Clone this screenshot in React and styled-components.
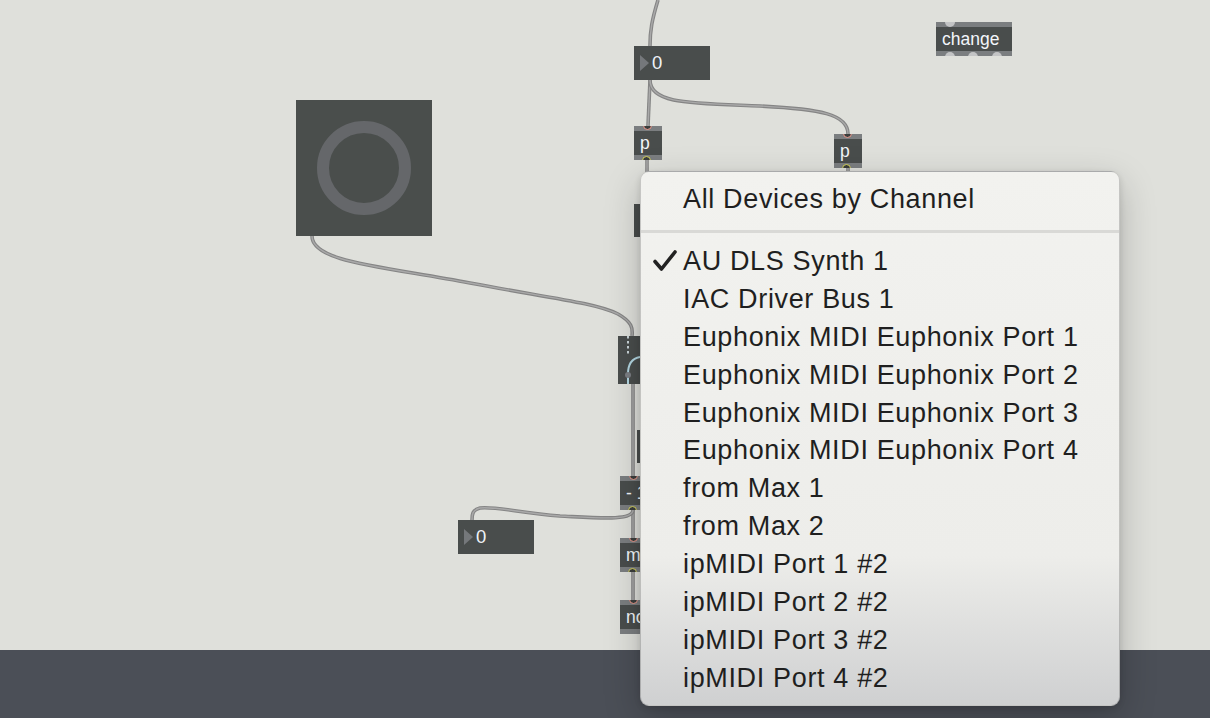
import React from 'react';
import styled, { createGlobalStyle } from 'styled-components';

const GlobalStyle = createGlobalStyle`
  html, body {
    margin: 0;
    padding: 0;
    overflow: hidden;
    background: #dfe0db;
  }
`;

const devices = [
  { name: 'AU DLS Synth 1', checked: true },
  { name: 'IAC Driver Bus 1' },
  { name: 'Euphonix MIDI Euphonix Port 1' },
  { name: 'Euphonix MIDI Euphonix Port 2' },
  { name: 'Euphonix MIDI Euphonix Port 3' },
  { name: 'Euphonix MIDI Euphonix Port 4' },
  { name: 'from Max 1' },
  { name: 'from Max 2' },
  { name: 'ipMIDI Port 1 #2' },
  { name: 'ipMIDI Port 2 #2' },
  { name: 'ipMIDI Port 3 #2' },
  { name: 'ipMIDI Port 4 #2' },
];

// patch cords, drawn in canvas coordinates
const cords = [
  'M658 0 C652 20, 650 30, 650 46',
  'M650 80 L648 126',
  'M650 80 C650 104, 690 103, 760 106 C820 109, 848 114, 848 134',
  'M647 160 L647 175',
  'M848 168 L848 175',
  'M312 236 C312 262, 380 266, 470 283 C550 298, 596 303, 618 314 C632 322, 633 328, 632 336',
  'M633 384 L633 476',
  'M633 510 L633 538',
  'M633 510 C633 521, 600 518, 560 516 C520 513, 495 506, 480 508 C472 510, 472 515, 472 520',
  'M633 572 L633 600',
];

const App = () => {
  return (
    <Page>
      <GlobalStyle />
      <Canvas>
        <Cords width="1210" height="650">
          {cords.map((d, i) => (
            <g key={i}>
              <path d={d} stroke="#858585" strokeWidth="3.6" fill="none" />
              <path d={d} stroke="#a9a9a9" strokeWidth="1.4" fill="none" />
            </g>
          ))}
        </Cords>

        <NumberBox $x={634} $y={46}>
          <Arrow />
          <NumValue>0</NumValue>
        </NumberBox>
        <NumberBox $x={458} $y={520}>
          <Arrow />
          <NumValue>0</NumValue>
        </NumberBox>

        <MaxObject $x={634} $y={126} $w={28}>
          <Band><Inlet $left={9} $color="#ef9c8f" /></Band>
          <ObjLabel>p</ObjLabel>
          <Band><Outlet $left={8} $color="#d9d75e" /></Band>
        </MaxObject>

        <MaxObject $x={834} $y={134} $w={28}>
          <Band><Inlet $left={9} $color="#ef9c8f" /></Band>
          <ObjLabel>p</ObjLabel>
          <Band><Outlet $left={8} $color="#d9d75e" /></Band>
        </MaxObject>

        <MaxObject $x={936} $y={22} $w={76}>
          <Band><Inlet $left={9} $fill /></Band>
          <ObjLabel $pad={6}>change</ObjLabel>
          <Band>
            <Outlet $left={9} $fill />
            <Outlet $left={32} $fill />
            <Outlet $left={56} $fill />
          </Band>
        </MaxObject>

        <Dial>
          <Ring />
        </Dial>

        <DarkBlock $x={634} $y={204} $w={30} $h={33} />
        <DarkBlock $x={637} $y={430} $w={30} $h={33} />

        <GainBox>
          <svg width="22" height="48" viewBox="0 0 22 48">
            <path d="M10 0 L10 18" stroke="#c9d4d8" strokeWidth="2" strokeDasharray="2.5 2.5" />
            <path d="M10 48 L10 38 Q10 23 22 21" stroke="#b3d7e3" strokeWidth="2" fill="none" />
            <circle cx="10" cy="39" r="3" fill="#7c7f84" />
          </svg>
        </GainBox>

        <MaxObject $x={620} $y={476} $w={60}>
          <Band><Inlet $left={9} $color="#ef9c8f" /></Band>
          <ObjLabel>- 1</ObjLabel>
          <Band><Outlet $left={8} $color="#d9d75e" /></Band>
        </MaxObject>

        <MaxObject $x={620} $y={538} $w={60}>
          <Band><Inlet $left={9} $color="#ef9c8f" /></Band>
          <ObjLabel>mtof</ObjLabel>
          <Band><Outlet $left={8} $color="#d9d75e" /></Band>
        </MaxObject>

        <MaxObject $x={620} $y={600} $w={80}>
          <Band><Inlet $left={9} $color="#ef9c8f" /></Band>
          <ObjLabel>noteout</ObjLabel>
          <Band />
        </MaxObject>
      </Canvas>

      <BottomBar />

      <Menu>
        <MenuItem>
          <CheckSlot />
          <ItemText>All Devices by Channel</ItemText>
        </MenuItem>
        <Separator />
        {devices.map((d) => (
          <MenuItem key={d.name}>
            <CheckSlot>
              {d.checked && (
                <svg width="24" height="22" viewBox="0 0 24 22">
                  <path d="M2 11.5 L8.5 19 L22 2" stroke="#222" strokeWidth="3.6" fill="none" strokeLinecap="round" strokeLinejoin="round" />
                </svg>
              )}
            </CheckSlot>
            <ItemText>{d.name}</ItemText>
          </MenuItem>
        ))}
      </Menu>
    </Page>
  );
};

// Styled components
const Page = styled.div`
  position: relative;
  width: 1210px;
  height: 718px;
  display: flex;
  flex-direction: column;
  overflow: hidden;
  font-family: "Liberation Sans", Arial, sans-serif;
`;

const Canvas = styled.div`
  position: relative;
  flex: 1;
  background: #dfe0db;
  overflow: hidden;
`;

const Cords = styled.svg`
  position: absolute;
  left: 0;
  top: 0;
  z-index: 0;
`;

const BottomBar = styled.div`
  height: 68px;
  background: #4b4f57;
`;

const Node = styled.div`
  position: absolute;
  left: ${(p) => p.$x}px;
  top: ${(p) => p.$y}px;
  z-index: 1;
`;

const NumberBox = styled(Node)`
  width: 76px;
  height: 34px;
  background: #494d4c;
  display: flex;
  align-items: center;
  padding-left: 6px;
  gap: 3px;
  box-sizing: border-box;
`;

const Arrow = styled.span`
  width: 0;
  height: 0;
  border-top: 8.5px solid transparent;
  border-bottom: 8.5px solid transparent;
  border-left: 9px solid #75787b;
`;

const NumValue = styled.span`
  color: #eef2f8;
  font-size: 18.5px;
  line-height: 1;
`;

const MaxObject = styled(Node)`
  width: ${(p) => p.$w}px;
  height: 34px;
  display: flex;
  flex-direction: column;
  background: #494d4c;
`;

const Band = styled.div`
  position: relative;
  height: 5px;
  background: #7b7e80;
  overflow: hidden;
`;

const Inlet = styled.span`
  position: absolute;
  left: ${(p) => p.$left}px;
  top: -5px;
  width: ${(p) => (p.$fill ? 10 : 7)}px;
  height: ${(p) => (p.$fill ? 10 : 7)}px;
  border-radius: 50%;
  background: ${(p) => (p.$fill ? '#c3c4c5' : '#3b3e3d')};
  border: ${(p) => (p.$fill ? 'none' : `1.5px solid ${p.$color}`)};
`;

const Outlet = styled(Inlet)`
  top: 1px;
`;

const ObjLabel = styled.div`
  flex: 1;
  display: flex;
  align-items: center;
  padding-left: ${(p) => p.$pad ?? 6}px;
  color: #f3f6fa;
  font-size: 17.5px;
  white-space: nowrap;
`;

const Dial = styled(Node).attrs({ $x: 296, $y: 100 })`
  width: 136px;
  height: 136px;
  background: #4a4e4c;
  display: flex;
  align-items: center;
  justify-content: center;
`;

const Ring = styled.div`
  width: 70px;
  height: 70px;
  border-radius: 50%;
  border: 12px solid #65676a;
`;

const DarkBlock = styled(Node)`
  width: ${(p) => p.$w}px;
  height: ${(p) => p.$h}px;
  background: #494d4c;
`;

const GainBox = styled(Node).attrs({ $x: 618, $y: 336 })`
  width: 30px;
  height: 48px;
  background: #494d4c;
  svg {
    display: block;
  }
`;

const Menu = styled.div`
  position: absolute;
  left: 640px;
  top: 171px;
  width: 480px;
  height: 535px;
  box-sizing: border-box;
  padding: 9px 0 8px;
  display: flex;
  flex-direction: column;
  border-radius: 9px;
  background: linear-gradient(to bottom, #f2f2ef 0%, #ededea 72%, #cfd0d1 100%);
  border: 1px solid rgba(0, 0, 0, 0.18);
  box-shadow: 0 12px 36px rgba(0, 0, 0, 0.22), 0 2px 6px rgba(0, 0, 0, 0.12);
  z-index: 5;
`;

const MenuItem = styled.div`
  display: flex;
  align-items: center;
  height: 38px;
`;

const CheckSlot = styled.div`
  width: 42px;
  display: flex;
  justify-content: flex-end;
  padding-right: 6px;
  box-sizing: border-box;
  svg {
    display: block;
    margin-top: -2px;
  }
`;

const ItemText = styled.span`
  font-size: 27px;
  letter-spacing: 0.65px;
  color: #1f1f1f;
  white-space: nowrap;
`;

const Separator = styled.div`
  height: 3px;
  margin: 11px 0 10px;
  background: #d9d9d6;
`;

export default App;
